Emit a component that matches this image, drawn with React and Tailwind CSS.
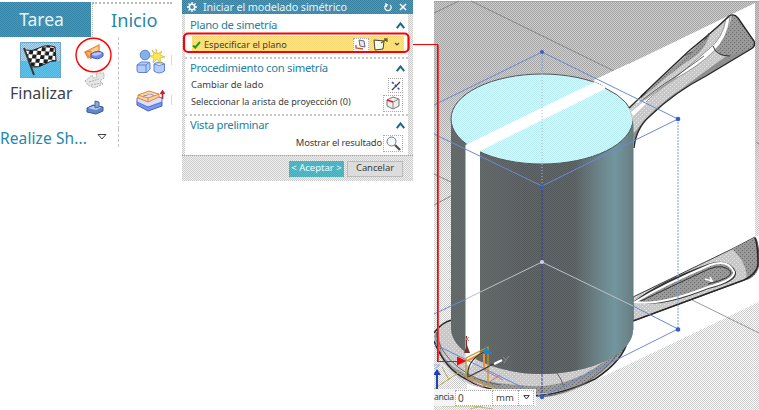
const Check = ({ id, a, b }) => (
  <pattern id={id} width="2" height="2" patternUnits="userSpaceOnUse">
    <rect width="2" height="2" fill={a} />
    <path d="M0 0h1v1H0zM1 1h1v1H1z" fill={b} shapeRendering="crispEdges" />
  </pattern>
);

const Dots = ({ id, a, b }) => (
  <pattern id={id} width="4" height="4" patternUnits="userSpaceOnUse">
    <rect width="4" height="4" fill={a} />
    <path d="M0 0h1v1H0zM2 2h1v1H2z" fill={b} shapeRendering="crispEdges" />
  </pattern>
);

const FlagIcon = () => (
  <svg width="41" height="36" viewBox="0 0 41 36" className="block">
    <defs>
      <Check id="sky" a="#80b8dc" b="#b0d8f4" />
      <Check id="sea" a="#48b4e4" b="#60c4ec" />
      <pattern id="flag" width="8" height="8" patternUnits="userSpaceOnUse" patternTransform="translate(6 4) rotate(10) skewY(-6)">
        <path fill="#fff" d="M0 0h8v8H0z" />
        <path fill="#1c1c1c" d="M0 0h4v4H0zM4 4h4v4H4z" />
      </pattern>
    </defs>
    <path fill="url(#sky)" d="M0 0h41v19H0z" />
    <path fill="url(#sea)" d="M0 19h41v17H0z" />
    <path d="M.5 .5h40v35H.5z" fill="none" stroke="#68a8c8" />
    <path d="M5 8Q12 10 19 6T35 5L36 19Q31 18 25 22T11 25Z" fill="url(#flag)" stroke="#222" strokeWidth="1" />
    <path d="M4 6 14 33" stroke="#383838" strokeWidth="2" />
  </svg>
);

const SymIcon = () => (
  <svg width="20" height="17" viewBox="0 0 20 17" className="block">
    <path d="M1 8 15 1V9L4 14Z" fill="#ffd090" stroke="#f08838" strokeWidth="1.3" />
    <path d="M1 8 7 7V15Z" fill="#ffb060" stroke="#e87828" />
    <path d="M7 10Q14 5 19 9V12Q14 17 7 13Z" fill="#7888e8" stroke="#4058c0" />
    <path d="M8 10Q14 7 18 9Q14 13 8 11Z" fill="#b8c8ff" />
  </svg>
);
const GrayIcon = () => (
  <svg width="21" height="17" viewBox="0 0 21 17" className="block" fill="#e6e6e6" stroke="#b0b0b0" strokeDasharray="2 1">
    <path d="M1 9 8 3 9 6 13 5 12 1 20 1V6L16 9 19 12 10 16 4 13Z" />
    <path d="M5 10 15 7M7 13 17 11" />
  </svg>
);
const BlockIcon = () => (
  <svg width="18" height="15" viewBox="0 0 18 15" className="block">
    <path d="M1 8 7 5 17 7V11L10 14 1 12Z" fill="#6088c8" stroke="#385898" />
    <path d="M2 8 8 6 15 7.5 10 10Z" fill="#b8d0f4" />
    <path d="M9 1 13 2V7L9 8Z" fill="#88a8d8" stroke="#4868a0" />
  </svg>
);
const ShapesIcon = () => (
  <svg width="30" height="25" viewBox="0 0 30 25" className="block" stroke="#6080d0" fill="#b4ccfa">
    <circle cx="9" cy="6" r="4.8" fill="#80b4e8" />
    <path d="M1 16 5 13H12Q14 13 14 15V20L11 23.500H3Q1 23.500 1 21ZM1 16H10V23M10 16 13 13.500" />
    <path d="M18 15Q23 11 28.500 15V22Q23 26 18 22ZM18 15Q23 18 28.500 15" />
    <path d="m20 0 1.5 5L26 2 24 6 29 8 24 9 25 14 21 10 17 14 18 9 14 7 18 6 16 1 20 5Z" fill="#ffe850" stroke="#d0b848" strokeWidth=".7" />
  </svg>
);
const LayersIcon = () => (
  <svg width="30" height="22" viewBox="0 0 30 22" className="block">
    <path d="M1 11 12 17 26 12V16L12 21 1 15Z" fill="#7898f0" stroke="#4060c8" />
    <path d="M1 8 14 4 26 8V12L12 17 1 12Z" fill="#d8e0ff" stroke="#6078c8" />
    <path d="M2 5 13 1 23 4V7L12 12 2 8ZM2 5 12 8 23 4M12 8V12" fill="#ffd0a0" stroke="#e08840" />
    <path d="M26.5 9V2M24.5 4 26.5 1 28.5 4" stroke="#c82030" strokeWidth="1.6" fill="none" />
  </svg>
);

const Chevron = () => (
  <svg width="9" height="7" viewBox="0 0 9 7" className="block"><path d="M.8 6.2 4.5 1.5 8.2 6.2" fill="none" stroke="#186880" strokeWidth="2" /></svg>
);

const Tile = ({ children }) => (
  <div className="flex h-[17px] w-[20px] shrink-0 items-center justify-center border border-dotted border-[#a8a8a8] bg-white">{children}</div>
);

const Ribbon = () => (
  <section className="h-[150px] w-[172px] shrink-0 overflow-hidden pt-[2px] text-[#2488ac]">
    <div className="flex h-[35px]">
      <div className="flex w-[91px] items-center justify-center bg-[repeating-conic-gradient(#4c98b8_0_25%,#3484a8_0_50%)] bg-[length:2px_2px] pr-[8px] text-[17.5px] text-[#e4f4fc]">Tarea</div>
      <div className="ml-[1px] flex flex-1 items-center border-t-2 border-l border-dotted border-[#b8b8b8] pl-[18px] text-[18.2px]">Inicio</div>
    </div>
    <div className="flex h-[92px]">
      <div className="w-[82px] pt-[5px]">
        <div className="pl-[20px]"><FlagIcon /></div>
        <div className="mt-[3px] pl-[10px] text-[16px] leading-[24px] whitespace-nowrap text-[#404048]">Finalizar</div>
      </div>
      <div className="flex w-[37px] flex-col items-start gap-[11px] border-r border-dashed border-[#c4c4c4] pt-[7px] pl-[2px]">
        <SymIcon />
        <GrayIcon />
        <div className="pl-[2px]"><BlockIcon /></div>
      </div>
      <div className="flex flex-col gap-[16px] pt-[12px] pl-[17px]"><ShapesIcon /><LayersIcon /></div>
      <div className="flex flex-col gap-[30px] pt-[18px] pl-[5px]">
        <i className="block h-[10px] w-px bg-[#ffd0a0]" />
        <i className="block h-[10px] w-px bg-[#ffd0a0]" />
      </div>
    </div>
    <div className="flex h-[18px] w-[119px] items-center justify-between border-r border-dashed border-[#c4c4c4]">
      <span className="text-[15.5px] leading-[18px] tracking-[0.1px] whitespace-nowrap">Realize Sh...</span>
      <svg width="10" height="6" viewBox="0 0 10 6" className="mr-[11px] mb-[3px]"><path d="M1 .5H9L5 5Z" fill="#fff" stroke="#444" /></svg>
    </div>
  </section>
);

const Title = ({ children }) => (
  <div className="flex h-[18px] items-center justify-between pr-[3px] pl-[5px] text-[11.3px] tracking-[-0.31px] text-[#2880a0]"><span>{children}</span><Chevron /></div>
);

const Dialog = () => (
  <section className="ml-[10px] flex h-[181px] w-[231px] shrink-0 flex-col bg-[repeating-conic-gradient(#f0f0f0_0_25%,#cccccc_0_50%)] bg-[length:2px_2px] text-[9.4px] whitespace-nowrap text-[#3c3c3c]">
    <header className="flex h-[14px] items-center bg-[repeating-conic-gradient(#5498b4_0_25%,#3880a0_0_50%)] bg-[length:2px_2px] pr-[6px] pl-[5px] text-[10.8px] leading-[14px] tracking-[-0.12px] text-[#e4f4fa]">
      <svg width="10" height="10" viewBox="0 0 10 10"><circle cx="5" cy="5" r="2.7" fill="none" stroke="#fff" strokeWidth="1.5" /><path d="M5 0V2M5 8V10M0 5H2M8 5H10M1.5 1.5 2.8 2.8M7.2 7.2 8.5 8.5M8.5 1.5 7.2 2.8M2.8 7.2 1.5 8.5" stroke="#fff" strokeWidth="1.3" /></svg>
      <span className="ml-[6px] flex-1">Iniciar el modelado simétrico</span>
      <svg width="8" height="9" viewBox="0 0 8 9"><path d="M2 2A3.2 3.2 0 1 0 6 2M1 .8 3.3 1.6 2 4" fill="none" stroke="#fff" strokeWidth="1.2" /></svg>
      <svg width="8" height="8" viewBox="0 0 8 8" className="ml-[7px]"><path d="m1 1 6 6M7 1 1 7" stroke="#fff" strokeWidth="1.6" /></svg>
    </header>
    <div className="mr-[5px] ml-[3px] flex flex-1 flex-col bg-white">
      <div className="mt-[2px]"><Title>Plano de simetría</Title></div>
      <div className="mt-[2px] mr-[4px] ml-[7px] flex h-[17px] items-center bg-[repeating-conic-gradient(#ffec60_0_25%,#f8d870_0_50%)] bg-[length:2px_2px]">
        <svg width="9" height="8" viewBox="0 0 9 8"><path d="M1 4.5 3.3 6.5 8 1" fill="none" stroke="#18a028" strokeWidth="2" /></svg>
        <span className="ml-[3px] flex-1 text-[9.2px]">Especificar el plano</span>
        <div className="flex h-[14px] w-[16px] items-center justify-center border border-dotted border-[#aaa] bg-white"><svg width="12" height="11" viewBox="0 0 12 11" fill="none"><path d="M4 1 9 2 10 8 5 7Z" fill="#e8e8f0" stroke="#667" /><path d="M1 6 1 9 8 10" stroke="#e05020" strokeWidth="1.4" /></svg></div>
        <svg width="15" height="13" viewBox="0 0 15 13" className="ml-[4px]"><path d="M1 2 11 3 10 11 2 12Z" fill="#f4ffe8" stroke="#444" /><path d="M8 5 14 1M11 1H14V4" stroke="#666620" fill="none" strokeWidth="1.3" /></svg>
        <svg width="6" height="5" viewBox="0 0 6 5" className="mr-[4px] ml-[6px]"><path d="m1 1 2 2 2-2" fill="none" stroke="#444" strokeWidth="1.2" /></svg>
      </div>
      <div className="mt-[4px] border-t-2 border-dotted border-[#c8c8c8]" />
      <Title>Procedimiento con simetría</Title>
      <div className="flex h-[17px] items-center justify-between pr-[5px] pl-[6px]"><span className="pb-px">Cambiar de lado</span><div className="flex h-[15px] w-[15px] items-center justify-center border border-dotted border-[#aaa]"><svg width="10" height="10" viewBox="0 0 10 10"><path d="m1 1 8 8" stroke="#3048c0" strokeWidth="1.5" strokeDasharray="2.500 1.500" /><path d="M9 1 1 9" stroke="#444" strokeWidth="1.2" /></svg></div></div>
      <div className="flex h-[18px] items-center justify-between pr-[5px] pl-[6px] text-[9.1px]"><span className="pb-[2px]">Seleccionar la arista de proyección (0)</span><Tile><svg width="14" height="14" viewBox="0 0 14 14"><path d="M1 4 7 1 13 3V10L7 13 1 10Z" fill="#eee" stroke="#777" /><path d="M7 6V13M7 6 13 3" stroke="#888" /><path d="M1 4 7 6" stroke="#e02020" strokeWidth="1.8" /></svg></Tile></div>
      <div className="mt-[2px] border-t-2 border-dotted border-[#c8c8c8]" />
      <Title>Vista preliminar</Title>
      <div className="flex h-[18px] items-center justify-end gap-px pr-[5px] tracking-[-0.15px]"><span>Mostrar el resultado</span><Tile><svg width="15" height="15" viewBox="0 0 15 15"><circle cx="5.5" cy="5.5" r="4.5" fill="#f4fafc" stroke="#777" /><path d="m9 9 5 5" stroke="#555" strokeWidth="2.4" /></svg></Tile></div>
    </div>
    <footer className="flex h-[26px] items-center justify-end gap-[3px] border-t border-dotted border-[#aaa] pr-[10px] text-[9.5px]">
      <div className="flex h-[16px] w-[55px] items-center justify-center bg-[repeating-conic-gradient(#4ca8bc_0_25%,#58bcc8_0_50%)] bg-[length:2px_2px] text-[#e8fcff]">&lt; Aceptar &gt;</div>
      <div className="flex h-[16px] w-[56px] items-center justify-center border border-[#bbb] bg-[#dcdcdc] tracking-[-0.1px]">Cancelar</div>
    </footer>
  </section>
);

const Scene = () => (
  <svg width="325" height="410" viewBox="434 0 325 410" className="block">
    <defs>
      <Check id="bgA" a="#cccccc" b="#a4a4a4" />
      <Check id="bgB" a="#ffffff" b="#cacaca" />
      <Check id="lid" a="#ccffff" b="#b8ecf2" />
      <Check id="body" a="#6a6a6a" b="#606666" />
      <Check id="mid" a="#646666" b="#505458" />
      <Dots id="rim" a="#c8c8c8" b="#e4e4e4" />
      <Dots id="grip" a="#999999" b="#6c6c6c" />
      <Check id="teal" a="#669999" b="#7498a0" />
      <linearGradient id="down" x1="0" y1="0" x2="0" y2="1"><stop offset="0" stopColor="#000" /><stop offset=".2" stopColor="#181818" /><stop offset=".6" stopColor="#fff" /></linearGradient>
      <linearGradient id="side" x1="0" x2="1" y1="0" y2="0"><stop offset="0" stopColor="#000" /><stop offset=".68" stopColor="#000" /><stop offset=".9" stopColor="#fff" /><stop offset="1" stopColor="#777" /></linearGradient>
      <linearGradient id="core" x1="0" x2="1" y1="0" y2="0"><stop offset=".15" stopColor="#000" /><stop offset=".4" stopColor="#bbb" /><stop offset=".65" stopColor="#bbb" /><stop offset=".85" stopColor="#000" /></linearGradient>
      <mask id="fade"><path d="M434 0h325v410H434z" fill="url(#down)" /></mask>
      <mask id="shine"><path d="M451 100h182v280H451z" fill="url(#side)" /></mask>
      <mask id="shade"><path d="M451 100h182v280H451z" fill="url(#core)" /></mask>
    </defs>
    <path d="M434 1h325v409H434z" fill="url(#bgA)" />
    <path d="M434 1h325v409H434z" fill="url(#bgB)" mask="url(#fade)" />
    <path d="M434 1.5H759" stroke="#90b0b0" />
    <path d="M434 13 459 1M471 1 614 71M434 174 451 182M434 205 451 196M756 142 759 144" stroke="#888" fill="none" />
    <path d="M755 3 467 142V390H575L759 302V236H755Z" fill="#fff" />
    <path d="M692 300 759 333" stroke="#999" />

    {/* upper handle */}
    <path d="M629 108Q662 76 690 50Q716 29 729 16Q734 13 738 18L754 41Q756 46 751 49L706 76Q675 92 650 116Q636 128 634 148L632 120Z" fill="url(#rim)" />
    <path d="M630 107 690 52 710 34Q706 46 698 54Q665 76 630 109Z" fill="url(#grip)" />
    <path d="M712 32 724 20Q722 36 712 44L706 50Q713 41 712 32Z" fill="url(#rim)" />
    <path d="M732 15Q735 14 738 18L754 41Q756 45 751 49L730 57Q717 56 714 49Q729 34 732 15Z" fill="url(#grip)" />
    <path d="M752 48Q735 59 706 76Q675 92 650 116Q636 128 634 148L633 134Q652 108 684 87Q704 72 725 57Z" fill="#8f8f8f" />
    <path d="M633 110Q650 95 675 78L709 49Q723 38 726 19L730 17Q728 38 713 52Q700 65 675 79Q650 94 633 117Z" fill="#fff" stroke="#777" strokeWidth=".7" />
    <path d="M713 46Q716 56 730 56" fill="none" stroke="#333" />
    <path d="M630 107Q662 76 690 50Q716 29 729 16Q734 13 738 18L754 41Q756 46 751 49L706 76Q675 92 650 116Q636 128 634 148" fill="none" stroke="#292929" strokeWidth="1.4" />
    <path d="M684 56 692 52M705 40 709 33M632 109Q655 89 675 77L704 56" stroke="#444" strokeWidth=".8" fill="none" />

    {/* lower handle */}
    <path d="M633 297 732 249 755 237Q759 242 759 264L756 272 747 279 633 321Z" fill="url(#rim)" stroke="#444" />
    <path d="M732 249 756 237Q759 249 759 267Q756 277 747 280Q747 262 732 249Z" fill="url(#grip)" />
    <path d="M755 238Q758 245 758 265Q756 275 744 280L633 321" fill="none" stroke="#292929" strokeWidth="1.600" />
    <path d="M633 302Q660 281 708 264Q729 257 736 272Q738 282 708 289Q660 309 633 302Z" fill="#333" />
    <path d="M635 302Q665 284 710 265Q728 259 734 272Q735 280 708 287Q660 306 635 302Z" fill="url(#grip)" stroke="#fff" strokeWidth="2" />
    <path d="M641 301Q668 288 709 269Q724 263 731 272Q732 278 708 284" fill="none" stroke="#333" />
    <path d="m705 279 7 2-2-4M710 281h3" stroke="#fff" fill="none" strokeWidth="1.4" />

    {/* base */}
    <path d="M451 320Q435 324 434 342Q440 365 458 378Q472 388 495 390Q510 397 550 397Q580 392 604 373Q624 356 628 338L633 300 500 290Z" fill="url(#rim)" />
    <path d="M434 336Q442 370 476 382Q540 408 595 377Q622 358 628 341Q622 349 614 354Q567 393 520 385Q458 382 442 354L438 330Z" fill="url(#grip)" />
    <path d="M434 333Q442 322 452 320M434 341Q445 369 466 379Q479 388 503 391Q540 405 595 379Q624 360 628 339" fill="none" stroke="#292929" strokeWidth="1.5" />
    <path d="M436 332Q439 352 458 367Q475 381 500 385M542 397Q590 391 619 352M557 373Q561 378 564 387" fill="none" stroke="#666" />

    {/* body */}
    <path d="M451 119V330C453 354 495 374 542 374S633 354 633 330V119Z" fill="url(#body)" />
    <path d="M451 119V330C453 354 495 374 542 374S633 354 633 330V119Z" fill="url(#mid)" mask="url(#shade)" />
    <path d="M451 119V330C453 354 495 374 542 374S633 354 633 330V119Z" fill="url(#teal)" mask="url(#shine)" />
    <ellipse cx="542" cy="119" rx="91" ry="45" fill="url(#lid)" stroke="#505858" />
    <path d="M465.500 145 595 82 607 88 480 151V352L470 368 465.500 362Z" fill="#fff" />
    <path d="M594 80 628 64 641 98 633 118Q631 101 606 88Z" fill="#fff" />
    <path d="M605 88Q632 101 633 119" fill="none" stroke="#555" />
    <path d="M633 119V330" stroke="#5a8080" />
    <path d="M629 108 634 104 646 99 634 126Z" fill="url(#rim)" />
    <path d="M631 112 646 100V104L633 116Z" fill="#fff" />
    <path d="M629 108 646 92" stroke="#292929" strokeWidth="1.400" />

    {/* bounding box */}
    <g fill="none" stroke="#6c88d8">
      <path d="M434 105 542 52 678 119 542 186 434 134" />
      <path d="M434 314 466 299M542 397 434 344M542 397 678 329 633 306" />
      <path d="M466 299 542 262 633 306" stroke="#b8c0c8" />
      <path d="M678 119V329M542 52V74" stroke="#78a0e8" strokeDasharray="2 1" />
      <path d="M542 74V186" stroke="#b8b0d8" strokeDasharray="1 2" />
      <path d="M542 186V397" stroke="#3c408c" strokeDasharray="3 1" />
    </g>
    <g fill="#3060c8"><circle cx="542" cy="52" r="2" /><circle cx="678" cy="119" r="2.3" /><circle cx="542" cy="187" r="2" /><circle cx="678" cy="329.500" r="2.3" /><circle cx="542" cy="397" r="2.2" /></g>
    <circle cx="542" cy="262" r="2" fill="#d0d4e8" />

    {/* datum and axes */}
    <g fill="none">
      <path d="M466 358 488 347V386L466 376Z" stroke="#c09828" strokeWidth="1.3" />
      <path d="M467 361 484 352V370" stroke="#f09030" strokeWidth="2" />
      <path d="M484 352Q466 361 468 377Q485 369 502 359" stroke="#333" strokeWidth="1.2" />
      <path d="M468 377 500 391M434 389 461 371M442 367 449 380" stroke="#b8a850" />
      <path d="M466 378 482 387 500 375M484 370 503 380" stroke="#c87878" />
      <path d="M494 364 502 360" stroke="#fff" strokeWidth="2.400" />
      <path d="M503 357 506 360 509 356M506 360 504 363" stroke="#888" />
      <path d="M466.500 353V336" stroke="#7b3030" strokeWidth="1.2" />
      <path d="m465 337 4 4M469 337 465 341" stroke="#d07070" />
      <path d="M437 389V370" stroke="#2040c0" strokeWidth="2" />
      <path d="M434 365H440L434 369" stroke="#90b0f0" />
    </g>
    <path d="m464 353 3-8 3 8Z" fill="#783030" />
    <path d="m483 354 3-8 2 4 5 4-7 0Z" fill="#1088e0" />
    <path d="m433 375 4-6 4 6Z" fill="#2040c0" />
    <path d="M442 406h40l-12 3M473 406l20 3" stroke="#c0b878" fill="none" />
  </svg>
);

export default function App() {
  return (
    <main className="relative flex h-[410px] w-[759px] items-start overflow-hidden bg-white font-['Noto_Sans','Open_Sans',sans-serif]">
      <Ribbon />
      <Dialog />
      <div className="relative ml-[21px] h-[410px] w-[325px] shrink-0 overflow-hidden">
        <Scene />
        <div className="absolute top-[389px] left-0 flex h-[17px] w-[102px] items-center bg-[#f4f4f4] text-[10px] text-[#454545]">
          <span className="w-[21px] shrink-0 text-[8.6px] tracking-[-0.3px]">ancia</span>
          <span className="h-[16px] flex-1 border border-dotted border-[#aaa] bg-white pl-[2px] leading-[14px]">0</span>
          <span className="h-[16px] w-[25px] border-y border-dotted border-[#aaa] bg-white pl-[3px] text-[9.5px] leading-[14px]">mm</span>
          <span className="mr-[2px] flex h-[16px] w-[16px] items-center justify-center border border-dotted border-[#aaa] bg-white"><svg width="7" height="5" viewBox="0 0 7 5"><path d="M.8.6H6.200L3.500 4Z" fill="#fff" stroke="#333" /></svg></span>
        </div>
      </div>
      <svg width="759" height="410" viewBox="0 0 759 410" className="pointer-events-none absolute inset-0" fill="none" stroke="#ff0000">
        <ellipse cx="93.500" cy="55" rx="17.500" ry="16.800" strokeWidth="1.400" />
        <rect x="184" y="33.500" width="224.500" height="18.500" rx="4" strokeWidth="2.200" />
        <path d="M413 44.500H437.500V361.500H458" strokeWidth="1" shapeRendering="crispEdges" />
        <path d="M438.500 45V361" stroke="#f04040" shapeRendering="crispEdges" />
        <path d="M457 356.500 466.500 361 457 365.500Z" fill="#ff0000" stroke="none" />
      </svg>
    </main>
  );
}
